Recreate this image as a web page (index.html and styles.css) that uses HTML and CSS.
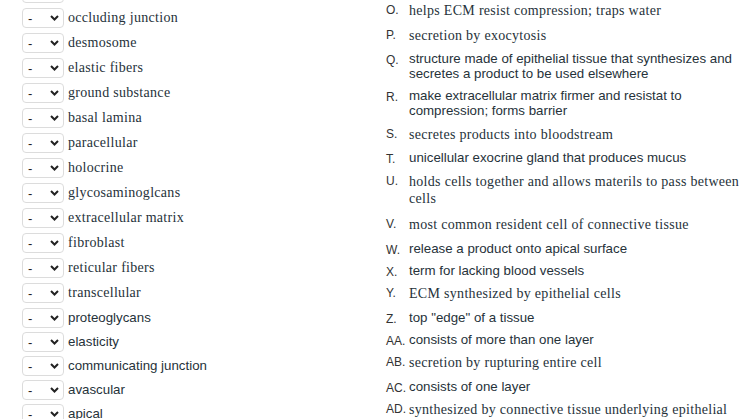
FILE: index.html
```html
<!DOCTYPE html>
<html>
<head>
<meta charset="utf-8">
<link rel="stylesheet" href="styles.css">
</head>
<body>
<div class="page">
  <div class="left">
    <div class="row serif prev"><div class="sel"><span class="dash"></span><svg class="chev" width="9" height="6" viewBox="0 0 9 6"><path d="M1 1 L4.5 4.5 L8 1" fill="none" stroke="#222" stroke-width="2"/></svg></div></div>
    <div class="row serif"><div class="sel"><span class="dash">-</span><svg class="chev" width="9" height="6" viewBox="0 0 9 6"><path d="M1 1 L4.5 4.5 L8 1" fill="none" stroke="#222" stroke-width="2"/></svg></div><span class="term">occluding junction</span></div>
    <div class="row serif"><div class="sel"><span class="dash">-</span><svg class="chev" width="9" height="6" viewBox="0 0 9 6"><path d="M1 1 L4.5 4.5 L8 1" fill="none" stroke="#222" stroke-width="2"/></svg></div><span class="term">desmosome</span></div>
    <div class="row serif"><div class="sel"><span class="dash">-</span><svg class="chev" width="9" height="6" viewBox="0 0 9 6"><path d="M1 1 L4.5 4.5 L8 1" fill="none" stroke="#222" stroke-width="2"/></svg></div><span class="term">elastic fibers</span></div>
    <div class="row serif"><div class="sel"><span class="dash">-</span><svg class="chev" width="9" height="6" viewBox="0 0 9 6"><path d="M1 1 L4.5 4.5 L8 1" fill="none" stroke="#222" stroke-width="2"/></svg></div><span class="term">ground substance</span></div>
    <div class="row serif"><div class="sel"><span class="dash">-</span><svg class="chev" width="9" height="6" viewBox="0 0 9 6"><path d="M1 1 L4.5 4.5 L8 1" fill="none" stroke="#222" stroke-width="2"/></svg></div><span class="term">basal lamina</span></div>
    <div class="row serif"><div class="sel"><span class="dash">-</span><svg class="chev" width="9" height="6" viewBox="0 0 9 6"><path d="M1 1 L4.5 4.5 L8 1" fill="none" stroke="#222" stroke-width="2"/></svg></div><span class="term">paracellular</span></div>
    <div class="row serif"><div class="sel"><span class="dash">-</span><svg class="chev" width="9" height="6" viewBox="0 0 9 6"><path d="M1 1 L4.5 4.5 L8 1" fill="none" stroke="#222" stroke-width="2"/></svg></div><span class="term">holocrine</span></div>
    <div class="row serif"><div class="sel"><span class="dash">-</span><svg class="chev" width="9" height="6" viewBox="0 0 9 6"><path d="M1 1 L4.5 4.5 L8 1" fill="none" stroke="#222" stroke-width="2"/></svg></div><span class="term">glycosaminoglcans</span></div>
    <div class="row serif"><div class="sel"><span class="dash">-</span><svg class="chev" width="9" height="6" viewBox="0 0 9 6"><path d="M1 1 L4.5 4.5 L8 1" fill="none" stroke="#222" stroke-width="2"/></svg></div><span class="term">extracellular matrix</span></div>
    <div class="row serif"><div class="sel"><span class="dash">-</span><svg class="chev" width="9" height="6" viewBox="0 0 9 6"><path d="M1 1 L4.5 4.5 L8 1" fill="none" stroke="#222" stroke-width="2"/></svg></div><span class="term">fibroblast</span></div>
    <div class="row serif"><div class="sel"><span class="dash">-</span><svg class="chev" width="9" height="6" viewBox="0 0 9 6"><path d="M1 1 L4.5 4.5 L8 1" fill="none" stroke="#222" stroke-width="2"/></svg></div><span class="term">reticular fibers</span></div>
    <div class="row serif"><div class="sel"><span class="dash">-</span><svg class="chev" width="9" height="6" viewBox="0 0 9 6"><path d="M1 1 L4.5 4.5 L8 1" fill="none" stroke="#222" stroke-width="2"/></svg></div><span class="term">transcellular</span></div>
    <div class="row sans"><div class="sel"><span class="dash">-</span><svg class="chev" width="9" height="6" viewBox="0 0 9 6"><path d="M1 1 L4.5 4.5 L8 1" fill="none" stroke="#222" stroke-width="2"/></svg></div><span class="term">proteoglycans</span></div>
    <div class="row sans"><div class="sel"><span class="dash">-</span><svg class="chev" width="9" height="6" viewBox="0 0 9 6"><path d="M1 1 L4.5 4.5 L8 1" fill="none" stroke="#222" stroke-width="2"/></svg></div><span class="term">elasticity</span></div>
    <div class="row sans"><div class="sel"><span class="dash">-</span><svg class="chev" width="9" height="6" viewBox="0 0 9 6"><path d="M1 1 L4.5 4.5 L8 1" fill="none" stroke="#222" stroke-width="2"/></svg></div><span class="term">communicating junction</span></div>
    <div class="row sans"><div class="sel"><span class="dash">-</span><svg class="chev" width="9" height="6" viewBox="0 0 9 6"><path d="M1 1 L4.5 4.5 L8 1" fill="none" stroke="#222" stroke-width="2"/></svg></div><span class="term">avascular</span></div>
    <div class="row sans"><div class="sel"><span class="dash">-</span><svg class="chev" width="9" height="6" viewBox="0 0 9 6"><path d="M1 1 L4.5 4.5 L8 1" fill="none" stroke="#222" stroke-width="2"/></svg></div><span class="term">apical</span></div>
  </div>
  <div class="right">
    <div class="item serif"><span class="lbl">O.</span><span class="txt">helps ECM resist compression; traps water</span></div>
    <div class="item serif"><span class="lbl">P.</span><span class="txt">secretion by exocytosis</span></div>
    <div class="item sans"><span class="lbl">Q.</span><span class="txt">structure made of epithelial tissue that synthesizes and<br>secretes a product to be used elsewhere</span></div>
    <div class="item sans"><span class="lbl">R.</span><span class="txt">make extracellular matrix firmer and resistat to<br>compression; forms barrier</span></div>
    <div class="item serif"><span class="lbl">S.</span><span class="txt">secretes products into bloodstream</span></div>
    <div class="item sans"><span class="lbl">T.</span><span class="txt">unicellular exocrine gland that produces mucus</span></div>
    <div class="item serif multi"><span class="lbl">U.</span><span class="txt">holds cells together and allows materils to pass between<br>cells</span></div>
    <div class="item serif"><span class="lbl">V.</span><span class="txt">most common resident cell of connective tissue</span></div>
    <div class="item sans"><span class="lbl">W.</span><span class="txt">release a product onto apical surface</span></div>
    <div class="item sans"><span class="lbl">X.</span><span class="txt">term for lacking blood vessels</span></div>
    <div class="item serif"><span class="lbl">Y.</span><span class="txt">ECM synthesized by epithelial cells</span></div>
    <div class="item sans"><span class="lbl">Z.</span><span class="txt">top "edge" of a tissue</span></div>
    <div class="item sans"><span class="lbl">AA.</span><span class="txt">consists of more than one layer</span></div>
    <div class="item serif"><span class="lbl">AB.</span><span class="txt">secretion by rupturing entire cell</span></div>
    <div class="item sans"><span class="lbl">AC.</span><span class="txt">consists of one layer</span></div>
    <div class="item serif"><span class="lbl">AD.</span><span class="txt">synthesized by connective tissue underlying epithelial</span></div>
  </div>
</div>
</body>
</html>
```
FILE: styles.css
```css
html, body {
  margin: 0;
  padding: 0;
  background: #fff;
  overflow: hidden;
}
body {
  color: #26323a;
  font-family: "Liberation Sans", Arial, sans-serif;
  font-size: 13px;
}
.page {
  display: flex;
  align-items: flex-start;
  height: 419px;
  overflow: hidden;
}
.left {
  width: 364px;
  padding-left: 22px;
  margin-top: -19.5px;
  flex: none;
}
.row {
  display: flex;
  align-items: center;
  height: 25px;
}
.row.sans {
  height: 24px;
}
.sel {
  width: 42px;
  height: 20px;
  box-sizing: border-box;
  border: 1px solid #dcdcdc;
  border-radius: 4px;
  background: #fff;
  display: flex;
  align-items: center;
  justify-content: space-between;
  padding: 0 4px 0 5px;
  flex: none;
  font-family: "Liberation Sans", Arial, sans-serif;
  font-size: 13px;
  color: #222;
}
.dash {
  line-height: 1;
  margin-top: 1px;
}
.chev {
  display: block;
}
.term {
  margin-left: 4px;
  white-space: nowrap;
}
.row.serif .term {
  font-family: "Liberation Serif", "Times New Roman", serif;
  font-size: 14px;
  letter-spacing: 0.3px;
}
.row.sans .term {
  font-family: "Liberation Sans", Arial, sans-serif;
  font-size: 13.3px;
}
.right {
  margin-top: -2.5px;
  flex: 1;
}
.item {
  display: grid;
  grid-template-columns: 23px 1fr;
  align-items: start;
}
.item.serif {
  padding: 4px 0;
}
.item.serif.multi {
  padding-bottom: 5.5px;
}
.item.sans {
  padding: 3.5px 0;
}
.lbl {
  font-family: "Liberation Sans", Arial, sans-serif;
  font-size: 12px;
  color: #333;
  white-space: nowrap;
}
.item.serif .lbl {
  line-height: 17px;
}
.item.sans .lbl {
  line-height: 15px;
  padding-top: 2px;
  margin-bottom: -2px;
}
.item.serif .txt {
  font-family: "Liberation Serif", "Times New Roman", serif;
  font-size: 14px;
  letter-spacing: 0.3px;
  line-height: 17px;
}
.item.sans .txt {
  font-family: "Liberation Sans", Arial, sans-serif;
  font-size: 13.3px;
  line-height: 15px;
}
.txt {
  white-space: nowrap;
}
```
